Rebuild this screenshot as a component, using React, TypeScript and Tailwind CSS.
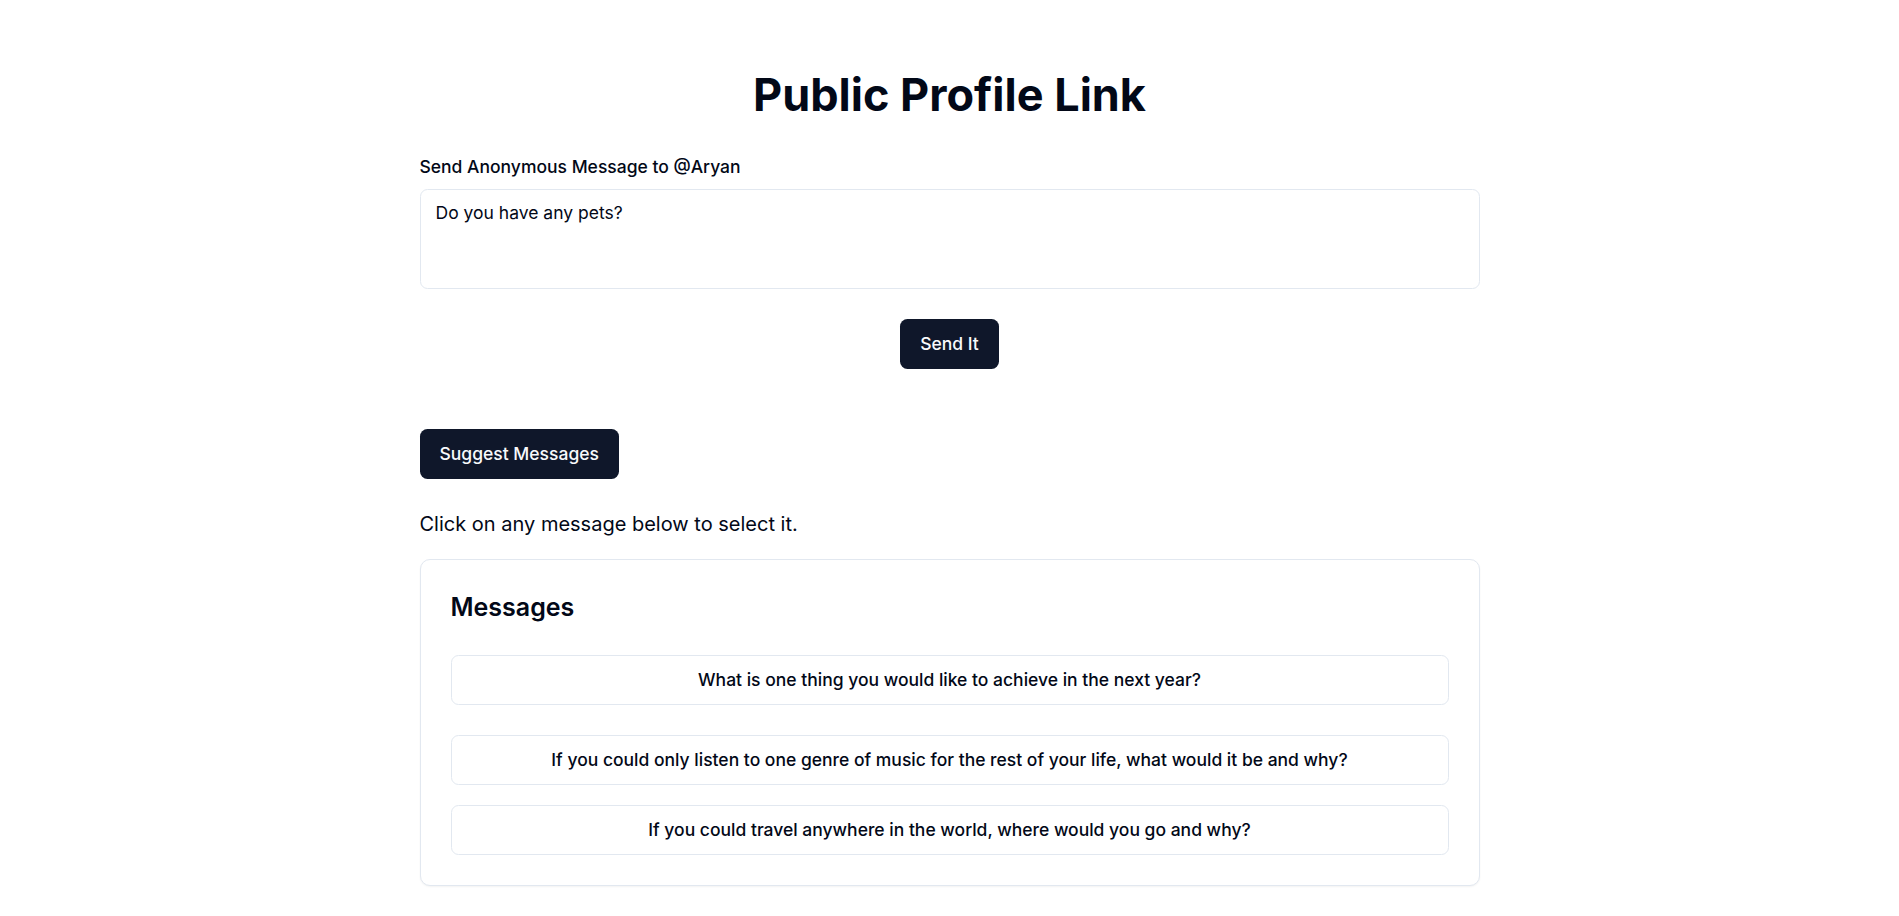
import React, { useState } from 'react';

const suggestions = [
  'What is one thing you would like to achieve in the next year?',
  'If you could only listen to one genre of music for the rest of your life, what would it be and why?',
  'If you could travel anywhere in the world, where would you go and why?',
];

const App: React.FC = () => {
  const [message, setMessage] = useState('Do you have any pets?');

  return (
    <div className="min-h-screen bg-white text-[#020817] font-['Inter',sans-serif]">
      <div className="mx-auto my-[40px] max-w-[1120px] rounded bg-white p-[30px]">
        <h1 className="mb-[34px] text-center text-[45px] leading-[50px] font-bold">Public Profile Link</h1>

        {/* Message form */}
        <form onSubmit={e => e.preventDefault()} className="flex flex-col gap-[30px]">
          <div className="flex flex-col gap-[10px]">
            <label className="text-[17.5px] leading-[25px] font-medium">Send Anonymous Message to @Aryan</label>
            <textarea
              value={message}
              onChange={e => setMessage(e.target.value)}
              placeholder="Write your anonymous message here"
              className="h-[100px] w-full resize-none rounded-[7.5px] border border-[#e2e8f0] bg-white px-[15px] py-[10px] text-[17.5px] leading-[25px] text-[#020817] outline-none"
            />
          </div>
          <div className="flex justify-center">
            <button
              type="submit"
              className="inline-flex h-[50px] items-center justify-center rounded-[7.5px] bg-[#0f172a] px-[20px] text-[17.5px] font-medium text-[#f8fafc]"
            >
              Send It
            </button>
          </div>
        </form>

        {/* Suggestions */}
        <div className="my-[40px] flex flex-col gap-[20px]">
          <div className="flex flex-col items-start">
            <button className="my-[20px] inline-flex h-[50px] items-center justify-center rounded-[7.5px] bg-[#0f172a] px-[20px] text-[17.5px] font-medium text-[#f8fafc]">
              Suggest Messages
            </button>
            <p className="mt-[10px] text-[20px] leading-[30px]">Click on any message below to select it.</p>
          </div>

          <div className="rounded-[10px] border border-[#e2e8f0] bg-white shadow-[0_1px_2px_0_rgba(0,0,0,0.05)]">
            <div className="p-[30px]">
              <h3 className="text-[25px] leading-[35px] font-semibold">Messages</h3>
            </div>
            <div className="flex flex-col gap-[20px] px-[30px] pb-[30px]">
              {suggestions.map((s, i) => (
                <button
                  key={i}
                  onClick={() => setMessage(s)}
                  className={`inline-flex h-[50px] items-center justify-center rounded-[7.5px] border border-[#e2e8f0] bg-white px-[20px] text-[17.5px] font-medium ${i === 0 ? 'mb-[10px]' : ''}`}
                >
                  {s}
                </button>
              ))}
            </div>
          </div>
        </div>

        <div className="my-[30px] h-px w-full bg-[#e2e8f0]" />
        <div className="text-center">
          <div className="mb-[20px] text-[20px]">Get Your Message Board</div>
          <button className="inline-flex h-[50px] items-center justify-center rounded-[7.5px] bg-[#0f172a] px-[20px] text-[17.5px] font-medium text-[#f8fafc]">
            Create Your Account
          </button>
        </div>
      </div>
    </div>
  );
};

export default App;
